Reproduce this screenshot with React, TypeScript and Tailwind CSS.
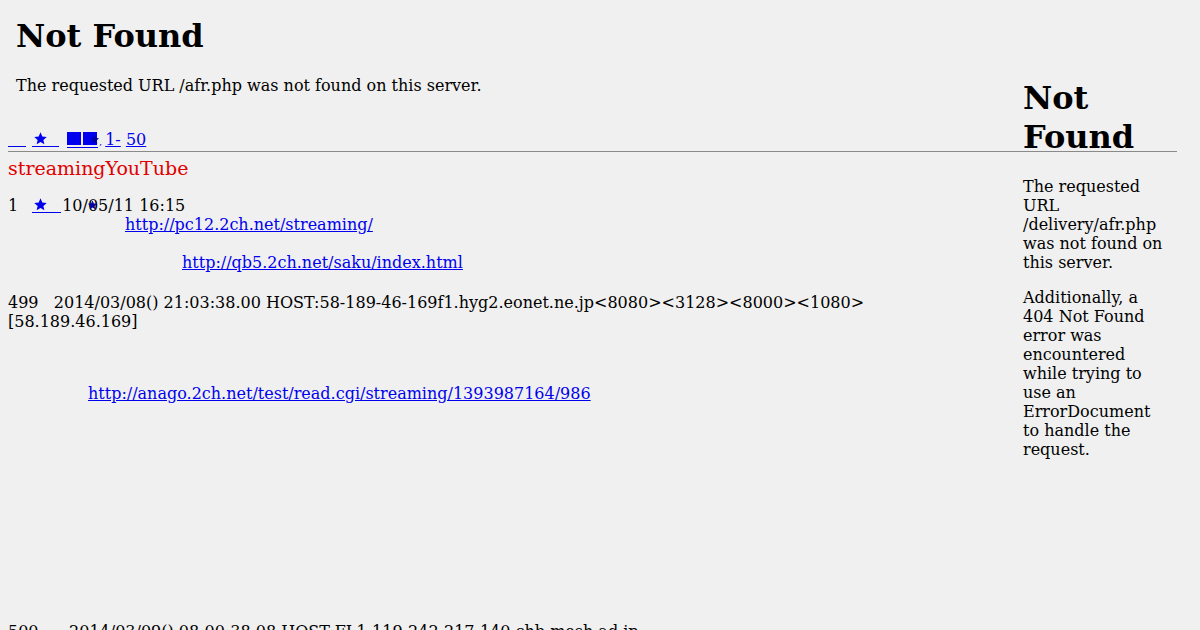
const serif = { fontFamily: '"DejaVu Serif", serif' }

function Link({ children, className = '' }: { children: React.ReactNode; className?: string }) {
  return <a className={`text-[#0000ee] underline ${className}`}>{children}</a>
}

function Blank({ w }: { w: string }) {
  return <span className={`inline-block ${w} h-[1px] bg-[#0000ee] relative top-[2px]`} />
}

function Star({ className = '' }: { className?: string }) {
  return (
    <svg viewBox="0 0 24 24" className={className} fill="currentColor">
      <path d="M12 2l2.9 6.9 7.1.6-5.4 4.7 1.6 7.1L12 17.6 5.8 21.3l1.6-7.1L2 9.5l7.1-.6z" />
    </svg>
  )
}

export default function App() {
  return (
    <div
      className="relative w-[1200px] h-[630px] overflow-hidden bg-[#f0f0f0] text-black text-[16px] leading-[19px]"
      style={serif}
    >
      {/* top error block */}
      <div className="pl-4 pt-[17px]">
        <h1 className="text-[32px] leading-[39px] font-bold">Not Found</h1>
        <p className="mt-[20px]">The requested URL /afr.php was not found on this server.</p>
      </div>

      <div className="px-2">
        {/* nav row */}
        <div className="mt-[35px] flex items-baseline whitespace-pre">
          <Blank w="w-[18px]" />
          <span className="w-[6px]" />
          <a className="relative text-[#0000ee] inline-flex items-baseline">
            <Star className="w-[15px] h-[15px] ml-[1px] relative top-[1px]" />
            <span className="absolute left-0 bottom-[-2px] w-[27px] h-[1px] bg-[#0000ee]" />
            <span className="inline-block w-[12px]" />
          </a>
          <span className="w-[7px]" />
          <a className="relative text-[#0000ee] inline-flex items-center text-[15px]">
            <span className="inline-block w-[14px] h-[13px] bg-[#0000ee]" />
            <span className="inline-block w-[2px]" />
            <span className="inline-block w-[14px] h-[13px] bg-[#0000ee]" />
            <Star className="absolute left-[22px] top-[2px] w-[11px] h-[11px] text-[#0000aa]" />
            <span className="absolute left-0 bottom-[-3px] w-[31px] h-[1px] bg-[#0000ee]" />
          </a>
          <span className="text-[10px] text-[#0000ee] mx-[2px]">,</span>
          <Link className="ml-[1px]">1-</Link>
          <span> </span>
          <Link>50</Link>
        </div>

        <hr className="mt-0 w-[1169px] border-0 border-t border-[#8a8a8a]" />

        <div className="mt-[5px] text-[19px] leading-[22px] text-[#e00000]">streamingYouTube</div>

        {/* post 1 */}
        <div className="mt-[17px] whitespace-pre flex items-baseline">
          <span>1</span>
          <span className="w-[14px]" />
          <a className="relative text-[#0000ee] inline-flex items-baseline">
            <Star className="w-[15px] h-[15px] ml-[1px] relative top-[1px]" />
            <span className="absolute left-0 bottom-[-2px] w-[29px] h-[1px] bg-[#0000ee]" />
            <span className="inline-block w-[14px]" />
          </a>
          <span className="relative">
            10/05/11 16:15
            <Star className="absolute left-[25px] top-[3px] w-[11px] h-[12px] text-[#0000aa]" />
          </span>
        </div>
        <div className="pl-[117px]">
          <Link>http://pc12.2ch.net/streaming/</Link>
        </div>
        <div className="pl-[174px] mt-[19px]">
          <Link>http://qb5.2ch.net/saku/index.html</Link>
        </div>

        {/* post 499 */}
        <div className="mt-[21px]">
          <div className="whitespace-pre">
            499   2014/03/08() 21:03:38.00 HOST:58-189-46-169f1.hyg2.eonet.ne.jp&lt;8080&gt;&lt;3128&gt;&lt;8000&gt;&lt;1080&gt;
          </div>
          <div>[58.189.46.169]</div>
        </div>
        <div className="pl-[80px] mt-[53px]">
          <Link>http://anago.2ch.net/test/read.cgi/streaming/1393987164/986</Link>
        </div>

        {/* post 500 */}
        <div className="mt-[219px] whitespace-pre">
          500      2014/03/09() 08:00:38.08 HOST:FL1-119-242-217-140.chb.mesh.ad.jp
        </div>
      </div>

      {/* right-hand error frame */}
      <div className="absolute left-[1023px] top-[79px] w-[145px]">
        <h1 className="text-[32px] leading-[39px] font-bold">Not Found</h1>
        <p className="mt-[20px]">The requested URL /delivery/afr.php was not found on this server.</p>
        <p className="mt-[16px]">
          Additionally, a 404 Not Found error was encountered while trying to use an ErrorDocument to handle the
          request.
        </p>
      </div>
    </div>
  )
}
